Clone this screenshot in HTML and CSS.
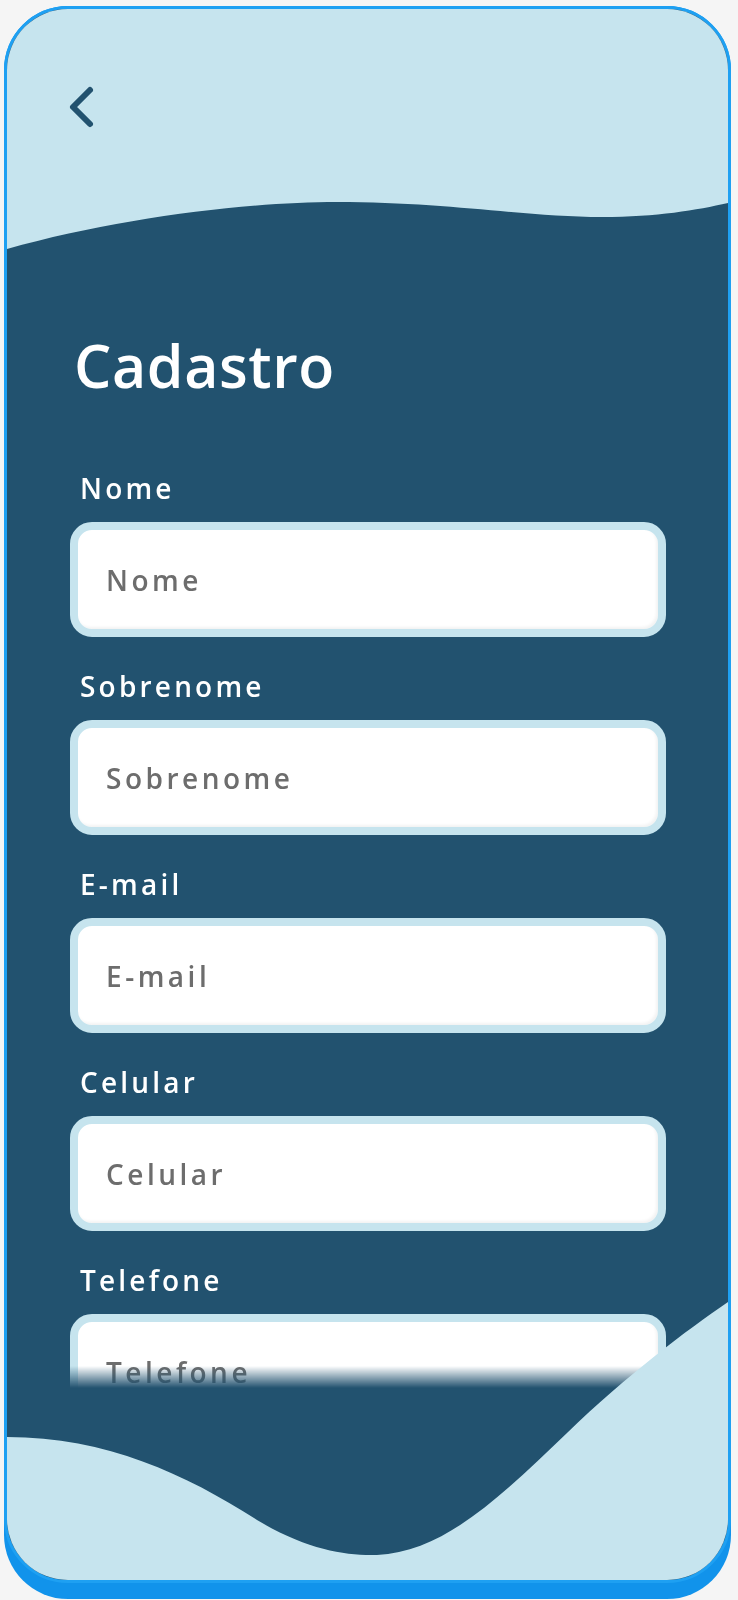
FILE: index.html
```html
<!DOCTYPE html>
<html lang="pt-BR">
<head>
<meta charset="utf-8">
<title>Cadastro</title>
<link rel="stylesheet" href="styles.css">
</head>
<body>
<div class="device">
<div class="phone">
  <header class="top">
    <button class="back" aria-label="Voltar">
      <svg width="30" height="44" viewBox="0 0 30 44"><path d="M23 5 L6 22 L23 39" fill="none" stroke="#22526f" stroke-width="6" stroke-linecap="round" stroke-linejoin="round"/></svg>
    </button>
  </header>
  <svg class="wave-top" width="721" height="48" viewBox="0 0 721 48" preserveAspectRatio="none"><path d="M0,0 H721 V1 C690,8 650,15 595,15 C520,15 440,0 330,0 C240,0 110,16 0,47 Z" fill="#c6e4ee"/></svg>
  <main class="content">
    <h1 class="title">Cadastro</h1>
    <form class="form">
      <div class="field">
        <label class="label" for="nome">Nome</label>
        <input class="input" id="nome" type="text" placeholder="Nome">
      </div>
      <div class="field">
        <label class="label" for="sobrenome">Sobrenome</label>
        <input class="input" id="sobrenome" type="text" placeholder="Sobrenome">
      </div>
      <div class="field">
        <label class="label" for="email">E-mail</label>
        <input class="input" id="email" type="text" placeholder="E-mail">
      </div>
      <div class="field">
        <label class="label" for="celular">Celular</label>
        <input class="input" id="celular" type="text" placeholder="Celular">
      </div>
      <div class="field">
        <label class="label" for="telefone">Telefone</label>
        <input class="input" id="telefone" type="text" placeholder="Telefone">
      </div>
    </form>
  </main>
  <svg class="wave-bottom" width="721" height="290" viewBox="0 0 721 290" preserveAspectRatio="none"><path d="M0,147 C100,147 180,185 250,230 C300,260 340,266 370,265 C440,262 500,200 560,143 C620,85 680,40 721,12 V290 H0 Z" fill="#c6e4ee"/></svg>
</div>
</div>
</body>
</html>
```
FILE: styles.css
```css
* { box-sizing: border-box; }
html, body { margin: 0; padding: 0; }
body {
  background: #f5f5f5;
  font-family: "Open Sans", "Lato", sans-serif;
  padding: 6px 7px 0 4px;
}
.device {
  width: 727px;
  padding-bottom: 16px;
  border-radius: 64px;
  background: #1193eb;
}
.phone {
  position: relative;
  width: 727px;
  height: 1577px;
  border: 3px solid #1ea0f2;
  border-radius: 64px;
  background: #22526f;
  overflow: hidden;
  display: flex;
  flex-direction: column;
}
.top {
  height: 193px;
  background: #c6e4ee;
  padding: 76px 0 0 60px;
  flex: none;
}
.back {
  display: block;
  padding: 0;
  border: 0;
  background: none;
  width: 30px;
  height: 44px;
}
.back svg { display: block; }
.wave-top { display: block; flex: none; }
.content {
  height: 1138px;
  flex: none;
  overflow: hidden;
  padding: 0 62px 0 63px;
  -webkit-mask-image: linear-gradient(to bottom, #000 calc(100% - 22px), transparent);
  mask-image: linear-gradient(to bottom, #000 calc(100% - 22px), transparent);
}
.title {
  margin: 80px 0 0 4px;
  font-size: 59px;
  line-height: 70px;
  font-weight: 600;
  color: #ffffff;
  letter-spacing: 0.6px;
}
.form {
  display: flex;
  flex-direction: column;
  gap: 36px;
  margin-top: 75px;
}
.field {
  display: flex;
  flex-direction: column;
  gap: 20px;
}
.label {
  padding-left: 10px;
  font-size: 28px;
  line-height: 27px;
  font-weight: 600;
  color: #ffffff;
  letter-spacing: 3.2px;
}
.input {
  display: block;
  width: 596px;
  height: 115px;
  border: 8px solid #c6e4ee;
  border-radius: 22px;
  background: #ffffff;
  padding: 0 28px;
  font-family: "Open Sans", "Lato", sans-serif;
  font-size: 28px;
  font-weight: 600;
  letter-spacing: 3.5px;
  color: #333;
  outline: none;
  box-shadow: inset -2px -2px 3px rgba(0, 0, 0, 0.05);
}
.input::placeholder { color: #6d6d6d; opacity: 1; }
.wave-bottom {
  position: absolute;
  left: 0;
  bottom: 0;
  display: block;
}
```
